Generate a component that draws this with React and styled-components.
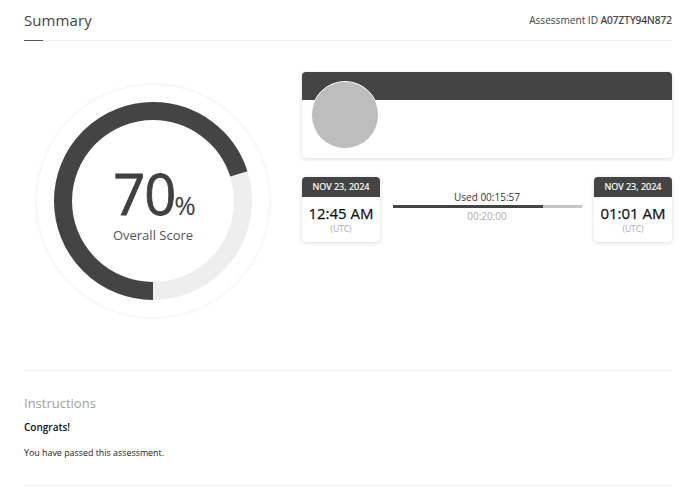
import React from "react";
import styled, { createGlobalStyle } from "styled-components";

const Global = createGlobalStyle`
  html, body { margin: 0; padding: 0; background: #fff; }
  body { font-family: "Open Sans", "Liberation Sans", sans-serif; color: #444; }
  * { box-sizing: border-box; }
`;

const Page = styled.div`
  width: 687px;
  height: 499px;
  padding: 0 15px 0 24px;
  overflow: hidden;
`;

const Header = styled.header`
  height: 41px;
  display: flex;
  align-items: flex-start;
  justify-content: space-between;
  border-bottom: 1px solid #efefef;
  position: relative;
  &::after {
    content: "";
    position: absolute;
    left: 0;
    bottom: -1px;
    width: 19px;
    height: 1px;
    background: #555;
  }
`;

const Title = styled.h1`
  margin: 10px 0 0;
  font-size: 15px;
  line-height: 20px;
  font-weight: 400;
  color: #444;
  letter-spacing: 0.1px;
`;

const AssessmentId = styled.div`
  margin-top: 12px;
  font-size: 10.1px;
  line-height: 16px;
  color: #444;
  b { font-weight: 400; color: #333; -webkit-text-stroke: 0.2px #333; }
`;

const Main = styled.section`
  height: 330px;
  display: flex;
  align-items: flex-start;
  border-bottom: 1px solid #f1f1f1;
`;

const ScoreColumn = styled.div`
  width: 278px;
  flex: none;
  padding: 44px 0 0 13px;
`;

const ScoreDisc = styled.div`
  position: relative;
  width: 232px;
  height: 232px;
  border-radius: 50%;
  background: #fff;
  box-shadow: 0 0 4px rgba(0, 0, 0, 0.09);
  display: flex;
  align-items: center;
  justify-content: center;
`;

const RingSvg = styled.svg`
  display: block;
`;

const ScoreText = styled.div`
  position: absolute;
  inset: 0;
  display: flex;
  flex-direction: column;
  align-items: center;
  justify-content: flex-start;
  padding-top: 86px;
`;

const ScoreValue = styled.div`
  display: flex;
  align-items: baseline;
  font-size: 56px;
  line-height: 44px;
  font-weight: 400;
  -webkit-text-stroke: 0.8px #404040;
  color: #404040;
  letter-spacing: -1px;
  margin-left: 3px;
`;

const Percent = styled.span`
  font-size: 26px;
  line-height: 26px;
  font-weight: 400;
  letter-spacing: 0;
  margin-left: -1px;
  -webkit-text-stroke: 0;
`;

const ScoreLabel = styled.div`
  font-size: 13px;
  line-height: 18px;
  margin-top: 8px;
  color: #555;
`;

const Details = styled.div`
  width: 370px;
  flex: none;
  padding-top: 31px;
  display: flex;
  flex-direction: column;
  gap: 19px;
`;

const ProfileCard = styled.div`
  position: relative;
  height: 86px;
  border-radius: 4px;
  background: #fff;
  box-shadow: 0 1px 4px rgba(0, 0, 0, 0.14);
  overflow: hidden;
`;

const ProfileBand = styled.div`
  height: 28px;
  background: #444;
`;

const Avatar = styled.div`
  position: absolute;
  left: 9px;
  top: 9px;
  width: 68px;
  height: 68px;
  border-radius: 50%;
  background: #bdbdbd;
  border: 1px solid #fff;
`;

const TimeRow = styled.div`
  display: flex;
  align-items: flex-start;
  justify-content: space-between;
`;

const TimeCard = styled.div`
  width: 78px;
  height: 65px;
  border-radius: 4px;
  background: #fff;
  box-shadow: 0 1px 4px rgba(0, 0, 0, 0.14);
  overflow: hidden;
  text-align: center;
`;

const TimeDate = styled.div`
  height: 20px;
  background: #444;
  color: #fff;
  font-size: 9px;
  line-height: 20px;
  font-weight: 400;
  -webkit-text-stroke: 0.2px #fff;
`;

const TimeClock = styled.div`
  font-size: 15px;
  line-height: 20px;
  margin-top: 6px;
  font-weight: 400;
  -webkit-text-stroke: 0.25px #111;
  color: #111;
`;

const TimeZone = styled.div`
  font-size: 8.5px;
  line-height: 12px;
  color: #aaa;
`;

const Usage = styled.div`
  width: 189px;
  padding-top: 13px;
  text-align: center;
`;

const UsedLabel = styled.div`
  font-size: 10px;
  line-height: 14px;
  color: #333;
`;

const Track = styled.div`
  height: 3px;
  margin-top: 1px;
  background: #c4c4c4;
`;

const Fill = styled.div`
  height: 100%;
  background: #444;
`;

const TotalLabel = styled.div`
  font-size: 10px;
  line-height: 14px;
  margin-top: 1px;
  color: #aaa;
`;

const Instructions = styled.section`
  height: 115px;
  padding-top: 23px;
  border-bottom: 1px solid #f1f1f1;
`;

const InstructionsTitle = styled.h2`
  margin: 0;
  font-size: 13px;
  line-height: 18px;
  font-weight: 400;
  color: #a0a0a0;
`;

const Congrats = styled.p`
  margin: 8px 0 0;
  font-size: 10px;
  line-height: 14px;
  font-weight: 600;
  color: #111;
`;

const Message = styled.p`
  margin: 12px 0 0;
  font-size: 8.9px;
  line-height: 14px;
  color: #222;
`;

const R = 90;
const C = 2 * Math.PI * R;

function ScoreRing({ value }) {
  return (
    <RingSvg width="198" height="198" viewBox="0 0 198 198">
      <circle cx="99" cy="99" r={R} fill="none" stroke="#eeeeee" strokeWidth="18" />
      <circle
        cx="99"
        cy="99"
        r={R}
        fill="none"
        stroke="#444444"
        strokeWidth="18"
        strokeDasharray={`${C * value} ${C}`}
        transform="rotate(90 99 99)"
      />
    </RingSvg>
  );
}

function TimeBox({ date, time }) {
  return (
    <TimeCard>
      <TimeDate>{date}</TimeDate>
      <TimeClock>{time}</TimeClock>
      <TimeZone>(UTC)</TimeZone>
    </TimeCard>
  );
}

export default function App() {
  return (
    <Page>
      <Global />
      <Header>
        <Title>Summary</Title>
        <AssessmentId>
          Assessment ID <b>A07ZTY94N872</b>
        </AssessmentId>
      </Header>
      <Main>
        <ScoreColumn>
          <ScoreDisc>
            <ScoreRing value={0.7} />
            <ScoreText>
              <ScoreValue>
                70<Percent>%</Percent>
              </ScoreValue>
              <ScoreLabel>Overall Score</ScoreLabel>
            </ScoreText>
          </ScoreDisc>
        </ScoreColumn>
        <Details>
          <ProfileCard>
            <ProfileBand />
            <Avatar />
          </ProfileCard>
          <TimeRow>
            <TimeBox date="NOV 23, 2024" time="12:45 AM" />
            <Usage>
              <UsedLabel>Used 00:15:57</UsedLabel>
              <Track>
                <Fill style={{ width: `${(957 / 1200) * 100}%` }} />
              </Track>
              <TotalLabel>00:20:00</TotalLabel>
            </Usage>
            <TimeBox date="NOV 23, 2024" time="01:01 AM" />
          </TimeRow>
        </Details>
      </Main>
      <Instructions>
        <InstructionsTitle>Instructions</InstructionsTitle>
        <Congrats>Congrats!</Congrats>
        <Message>You have passed this assessment.</Message>
      </Instructions>
    </Page>
  );
}
